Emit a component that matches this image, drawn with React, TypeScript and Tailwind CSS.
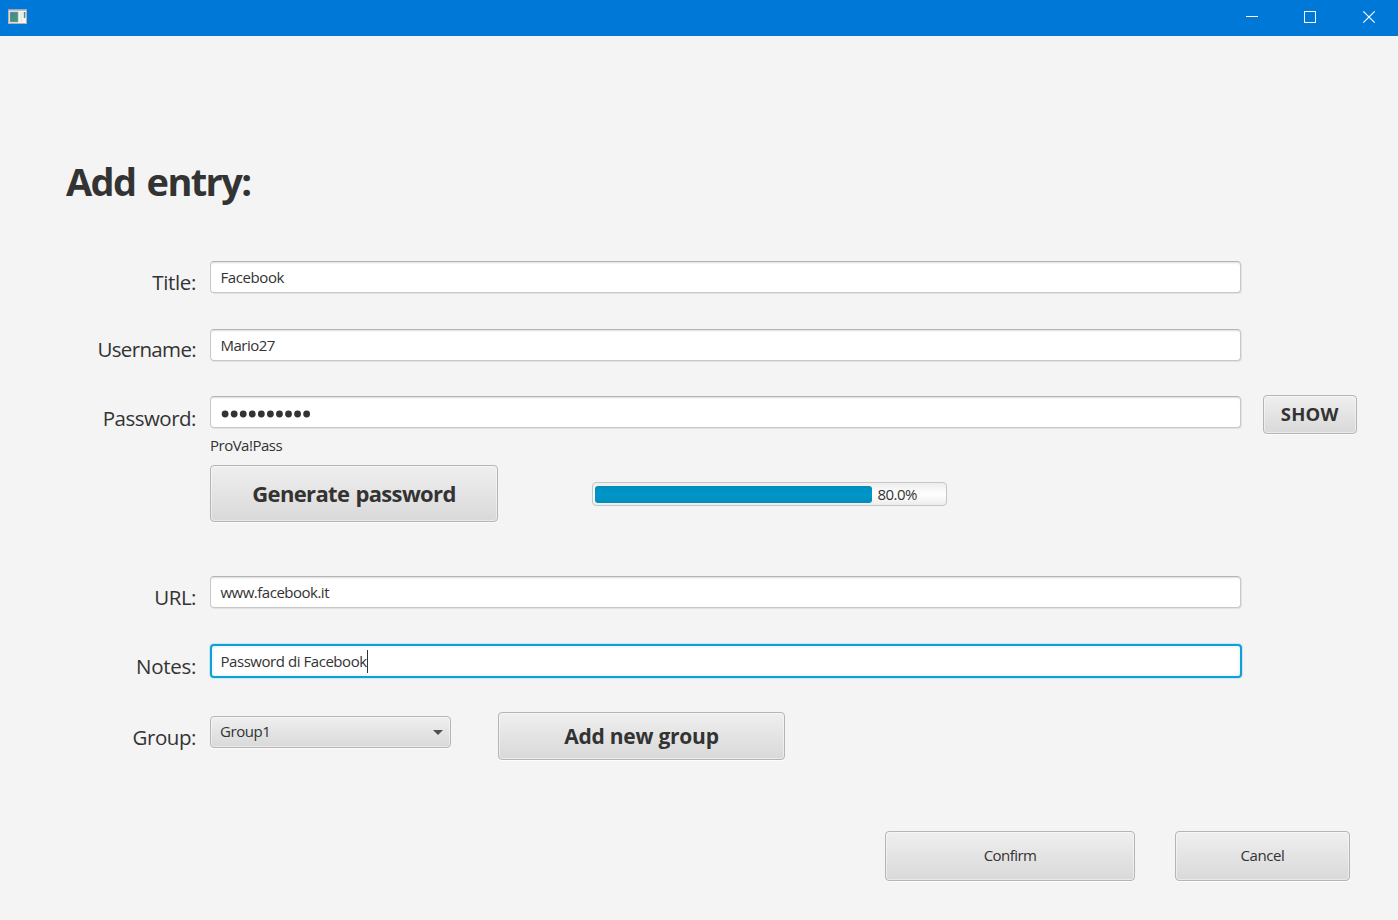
import React from 'react';

const buttonBase =
  'flex shrink-0 items-center justify-center rounded-[4px] border border-[#b5b5b5] bg-linear-to-b from-[#efefef] to-[#d9d9d9] shadow-[inset_0_0_0_1px_rgba(255,255,255,0.45),0_1px_1px_rgba(255,255,255,0.8)] whitespace-nowrap';

function Label({ children, className }: { children: string; className: string }) {
  return (
    <div className="flex w-[210px] shrink-0 justify-end pr-[14px] text-[20.5px] leading-[32px]">
      <span className={className}>{children}</span>
    </div>
  );
}

function Field({ children }: { children: React.ReactNode }) {
  return (
    <div className="flex h-[32px] w-[1031px] shrink-0 items-center rounded-[4px] border border-[#c8c8c8] border-t-[#b4b4b4] bg-white pl-[9.5px] text-[15px] leading-[20px] shadow-[inset_0_2px_2px_-1px_#dcdcdc,1px_1px_0_#e2e2e2]">
      {children}
    </div>
  );
}

export default function App() {
  return (
    <div className="flex h-[920px] w-[1398px] flex-col overflow-hidden bg-[#f4f4f4] font-['Open_Sans','Noto_Sans',sans-serif] text-[#333333]">
      <header className="flex h-[36px] shrink-0 items-start justify-between bg-[#0078d7]">
        <svg className="mt-[9px] ml-[8px]" width="19" height="16" viewBox="0 0 19 16">
          <defs>
            <linearGradient id="pane" x1="0" y1="0" x2="1" y2="1">
              <stop offset="0" stopColor="#4a7fa6" />
              <stop offset="1" stopColor="#3fa35a" />
            </linearGradient>
          </defs>
          <rect x="0.5" y="0.5" width="18" height="14" fill="#f5f5f5" stroke="#b4b4b8" />
          <rect x="0" y="0" width="19" height="1.6" fill="#9aa2b4" />
          <rect x="2" y="3" width="8" height="10" fill="url(#pane)" stroke="#8fa9a5" strokeWidth="0.6" />
          <rect x="12" y="3" width="2.5" height="10" fill="#ebebeb" />
          <rect x="15.8" y="3" width="1.6" height="6" fill="url(#pane)" />
        </svg>
        <svg width="168" height="36" viewBox="0 0 168 36" fill="none" stroke="white">
          <path d="M16 16.5h12" />
          <rect x="74.5" y="11.5" width="11" height="11" />
          <path d="M133.3 11.3l11.4 11.4M144.7 11.3l-11.4 11.4" strokeWidth="1.2" />
        </svg>
      </header>

      <h1 className="mt-[115px] ml-[66px] h-[110px] shrink-0 text-[38px] leading-[60px] font-bold whitespace-nowrap">
        <span className="tracking-[-1.65px] [word-spacing:3px]">Add entry:</span>
      </h1>

      <div className="flex h-[68px] shrink-0">
        <Label className="mt-[5px] tracking-[-0.35px]">Title:</Label>
        <Field><span className="-mt-px tracking-[-0.4px]">Facebook</span></Field>
      </div>
      <div className="flex h-[67px] shrink-0">
        <Label className="mt-[4px] tracking-[-0.65px]">Username:</Label>
        <Field><span className="-mt-px tracking-[-0.5px]">Mario27</span></Field>
      </div>
      <div className="flex h-[42px] shrink-0">
        <Label className="mt-[6px] tracking-[-0.5px]">Password:</Label>
        <Field>
          <svg className="mt-px" width="92" height="10" viewBox="0 0 92 10" fill="#333333" aria-label="Hidden password">
            {Array.from({ length: 10 }, (_, i) => (
              <circle key={i} cx={4.1 + i * 9.06} cy="6" r="3.4" />
            ))}
          </svg>
        </Field>
        <button className={`${buttonBase} -mt-[1px] ml-[22px] h-[38.5px] w-[93.5px] text-[18.5px] font-bold`}>
          <span className="tracking-[0.2px]">SHOW</span>
        </button>
      </div>
      <div className="h-[27px] shrink-0 pl-[210px] text-[15px] leading-[15px]">
        <span className="tracking-[-0.5px]">ProVa!Pass</span>
      </div>
      <div className="flex h-[111px] shrink-0 items-start pl-[210px]">
        <button className={`${buttonBase} h-[57px] w-[288px] text-[22px] font-bold`}>
          <span className="tracking-[-0.65px] [word-spacing:1px]">Generate password</span>
        </button>
        <div className="mt-[17px] ml-[93.5px] flex h-[24px] w-[355px] items-center rounded-[4px] border border-[#c6c6c6] bg-linear-to-b from-[#ededed] via-white to-[#ededed] pl-[2.5px]">
          <div className="h-[17px] w-[277px] rounded-[3px] bg-linear-to-b from-[#008dbd] via-[#0096c9] to-[#008dbd]" />
          <span className="ml-[5.5px] text-[15px] leading-[20px] tracking-[-0.55px]">80.0%</span>
        </div>
      </div>
      <div className="flex h-[68px] shrink-0">
        <Label className="mt-[5px] tracking-[-0.5px]">URL:</Label>
        <Field><span className="-mt-px tracking-[-0.5px]">www.facebook.it</span></Field>
      </div>
      <div className="flex h-[68px] shrink-0">
        <Label className="mt-[6px] tracking-[-0.3px]">Notes:</Label>
        <div className="flex h-[34px] w-[1032px] shrink-0 items-center rounded-[4px] border-2 border-[#109fd5] bg-white pl-[8.5px] text-[15px] shadow-[0_0_1px_1px_#c5e7f3,inset_0_0_0_2px_#f0fafe]">
          <span className="tracking-[-0.45px]">Password di Facebook</span>
          <span className="h-[23px] w-px bg-[#333333]" />
        </div>
      </div>
      <div className="flex h-[119px] shrink-0">
        <Label className="mt-[9px] tracking-[-0.45px]">Group:</Label>
        <button className={`${buttonBase} mt-[4px] h-[32px] w-[241px] pr-[7px] pl-[9px] text-[15px]`}>
          <span className="-mt-[2px] tracking-[-0.45px]">Group1</span>
          <svg className="ml-auto" width="10" height="5" viewBox="0 0 10 5" fill="#4f4f4f">
            <path d="M0 0h10L5 5z" />
          </svg>
        </button>
        <button className={`${buttonBase} ml-[47px] h-[48px] w-[287px] text-[21px] font-bold`}>
          <span className="mt-[1px] tracking-[-0.25px]">Add new group</span>
        </button>
      </div>
      <div className="flex shrink-0 gap-[40px] pl-[885px] text-[15px]">
        <button className={`${buttonBase} h-[50px] w-[250px]`}>
          <span className="-mt-[2px] tracking-[-0.55px]">Confirm</span>
        </button>
        <button className={`${buttonBase} h-[50px] w-[175px]`}>
          <span className="-mt-[2px] tracking-[-0.4px]">Cancel</span>
        </button>
      </div>
    </div>
  );
}
